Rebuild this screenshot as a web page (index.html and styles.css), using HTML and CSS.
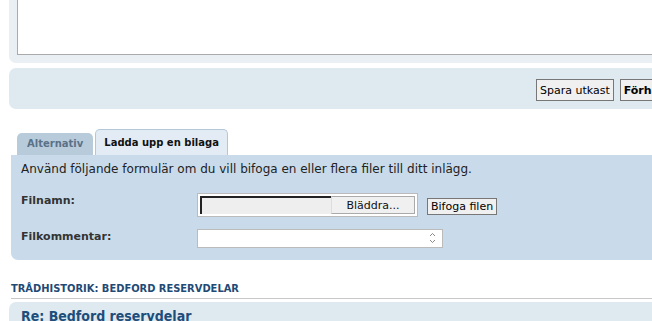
FILE: index.html
```html
<!DOCTYPE html>
<html lang="sv">
<head>
    <meta charset="UTF-8">
    <title>Svara på inlägg</title>
    <link rel="stylesheet" href="styles.css">
</head>
<body>
    <div class="page">
        <div class="editor-box">
            <textarea class="message"></textarea>
        </div>

        <div class="submit-row">
            <button class="btn">Spara utkast</button>
            <button class="btn btn-bold">Förhandsgranska</button>
        </div>

        <div class="tabs">
            <div class="tab">Alternativ</div>
            <div class="tab active">Ladda upp en bilaga</div>
        </div>
        <div class="attach-panel">
            <p class="intro">Använd följande formulär om du vill bifoga en eller flera filer till ditt inlägg.</p>
            <div class="form-row">
                <label class="label">Filnamn:</label>
                <div class="file-input">
                    <span class="file-name"></span>
                    <span class="file-browse">Bläddra...</span>
                </div>
                <button class="btn btn-attach">Bifoga filen</button>
            </div>
            <div class="form-row comment-row">
                <label class="label">Filkommentar:</label>
                <div class="comment-input">
                    <svg class="spin" width="7" height="12" viewBox="0 0 7 12">
                        <path d="M1 4 L3.5 1.5 L6 4 M1 8 L3.5 10.5 L6 8" fill="none" stroke="#8a8a8a" stroke-width="1"/>
                    </svg>
                </div>
            </div>
        </div>

        <h4 class="history-title">TRÅDHISTORIK: BEDFORD RESERVDELAR</h4>
        <div class="post">
            <h3 class="post-title">Re: Bedford reservdelar</h3>
        </div>
    </div>
</body>
</html>
```

FILE: styles.css
```css
body {
    margin: 0;
    overflow: hidden;
    background-color: #fff;
    font-family: "DejaVu Sans", Verdana, sans-serif;
    color: #222;
}
.page {
    width: 720px;
    padding-left: 9px;
}
.editor-box {
    background-color: #e9eff3;
    padding: 0 0 8px 8px;
    border-radius: 0 0 0 7px;
}
.message {
    display: block;
    width: 100%;
    height: 55px;
    box-sizing: border-box;
    border: 1px solid #aaa;
    border-top: none;
    border-right: none;
    resize: none;
    background: #fff;
}
.submit-row {
    margin-top: 5px;
    height: 41px;
    background-color: #dfe9f0;
    border-radius: 7px 0 0 7px;
    display: flex;
    align-items: center;
    padding-left: 527px;
    padding-top: 3px;
    box-sizing: border-box;
    gap: 6px;
}
.btn {
    font-family: "DejaVu Sans", sans-serif;
    font-size: 11px;
    padding: 2px 3px;
    height: 22px;
    background: #f0f0f0;
    border: 1px solid #777;
    color: #000;
    white-space: nowrap;
}
.btn-bold {
    font-weight: bold;
}
.tabs {
    margin-top: 20px;
    padding-left: 8px;
    display: flex;
    align-items: flex-end;
    gap: 2px;
    height: 26px;
}
.tab {
    font-size: 10px;
    font-weight: bold;
    color: #5a7188;
    background-color: #b8cbdb;
    border-radius: 5px 5px 0 0;
    padding: 0 10px;
    height: 22px;
    line-height: 22px;
}
.tab.active {
    color: #111;
    background-color: #e3ecf4;
    border: 1px solid #b4c7d8;
    border-bottom: none;
    height: 25px;
    line-height: 25px;
    padding: 0 8px;
}
.attach-panel {
    background-color: #c9dbea;
    border-radius: 0 0 0 7px;
    padding: 7px 0 13px 10px;
    margin-left: 2px;
}
.intro {
    margin: 0 0 17px;
    font-size: 12px;
    color: #222;
}
.form-row {
    display: flex;
    align-items: flex-start;
    height: 24px;
    margin-bottom: 12px;
}
.comment-row {
    margin-bottom: 0;
    height: 18px;
}
.label {
    width: 176px;
    padding-top: 1px;
    font-size: 11px;
    font-weight: bold;
    color: #333;
}
.file-input {
    display: flex;
    width: 221px;
    height: 24px;
    box-sizing: border-box;
    background: #fff;
    border: 1px solid #bbb;
    padding: 2px;
}
.file-name {
    width: 131px;
    background: #eee;
    border-top: 2px solid #222;
    border-left: 2px solid #222;
    box-sizing: border-box;
}
.file-browse {
    flex: 1;
    background: #f0f0f0;
    border: 1px solid #aaa;
    border-left-color: #ddd;
    font-size: 11px;
    text-align: center;
    line-height: 17px;
    color: #111;
}
.btn-attach {
    margin-left: 9px;
    margin-top: 5px;
    height: 17px;
    padding: 0 3px;
    line-height: 13px;
}
.comment-input {
    position: relative;
    width: 246px;
    height: 19px;
    box-sizing: border-box;
    background: #fff;
    border: 1px solid #bbb;
}
.spin {
    position: absolute;
    right: 6px;
    top: 2px;
}
.history-title {
    margin: 22px 0 0 2px;
    padding-bottom: 3px;
    border-bottom: 1px solid #c8c8c8;
    font-family: "DejaVu Sans Condensed", "DejaVu Sans", sans-serif;
    font-size: 11px;
    font-weight: bold;
    color: #1e4a75;
}
.post {
    margin-top: 3px;
    background-color: #dfe9f0;
    border-radius: 7px 0 0 0;
    padding: 6px 12px;
    height: 30px;
}
.post-title {
    margin: 0;
    font-family: "DejaVu Sans Condensed", "DejaVu Sans", sans-serif;
    font-size: 14px;
    color: #1d4d7a;
}
```
